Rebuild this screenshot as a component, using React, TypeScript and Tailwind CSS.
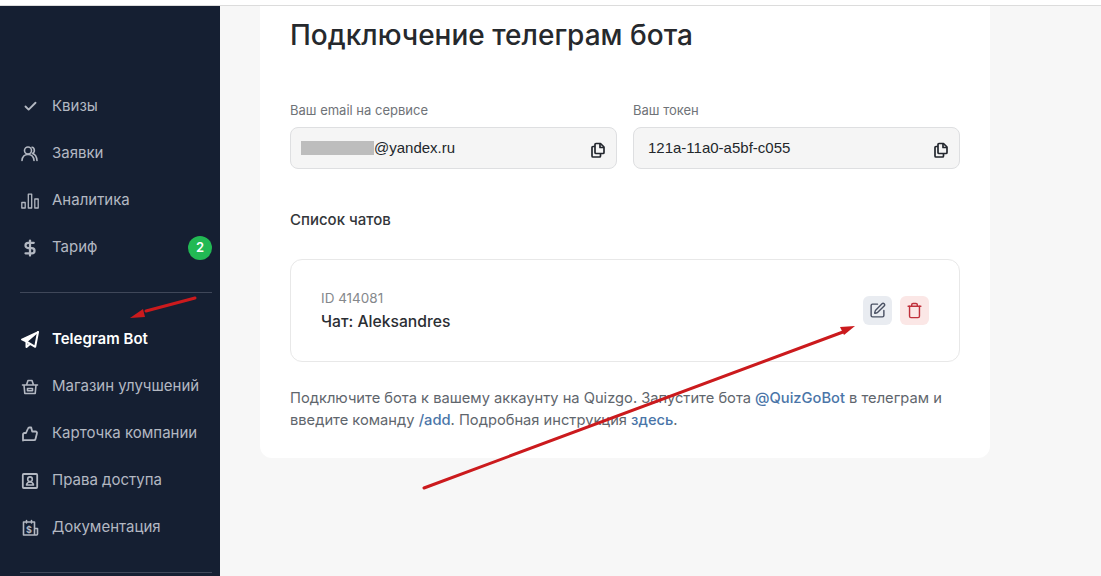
import { Check, DollarSign, SquarePen, Trash } from "lucide-react";
import type { ReactNode } from "react";

const font = "font-['Inter','Noto_Sans',sans-serif]";

function Glyph({ children }: { children: ReactNode }) {
    return (
        <svg width="18" height="18" viewBox="0 0 18 18" fill="none" stroke="currentColor" strokeWidth="1.6" strokeLinecap="round" strokeLinejoin="round">
            {children}
        </svg>
    );
}

const topItems: { label: string; icon: ReactNode; badge?: string }[] = [
    { label: "Квизы", icon: <Check size={15} strokeWidth={3} /> },
    {
        label: "Заявки",
        icon: (
            <Glyph>
                <circle cx="7" cy="5.500" r="3.500" />
                <path d="M1 15.500c.3-3.600 2.600-6 6-6s5.700 2.400 6 6M11 2.200c2.500.3 3.500 4.600.5 6.300 2.800.8 4.200 3.400 4.500 7" />
            </Glyph>
        ),
    },
    {
        label: "Аналитика",
        icon: (
            <Glyph>
                <path strokeWidth="1.300" d="M.8 10.500h3.400v5.500H.8zM7.300 2.200h3.400V16H7.300zM13.800 7h3.400v9h-3.400z" />
            </Glyph>
        ),
    },
    { label: "Тариф", icon: <DollarSign size={18} strokeWidth={3} />, badge: "2" },
];

const bottomItems: { label: string; icon: ReactNode; active?: boolean }[] = [
    {
        label: "Telegram Bot",
        active: true,
        icon: (
            <Glyph>
                <path fill="currentColor" strokeWidth="1.500" d="M17 1 .8 8.500l4.700 2.200L17 1Z" />
                <path strokeWidth="2" d="M17 1l-2.800 14.800-8.700-5.100v5.300l3.200-2.700" />
            </Glyph>
        ),
    },
    {
        label: "Магазин улучшений",
        icon: (
            <Glyph>
                <path d="M1.500 7h15M3 7l.8 8.500h10.400L15 7M5.500 7l1.500-4.500h4L12.500 7M6.500 10.500v2.200h5v-2.200z" />
            </Glyph>
        ),
    },
    {
        label: "Карточка компании",
        icon: (
            <Glyph>
                <path strokeWidth="1.800" d="M2 15.500V9.500a1.500 1.500 0 0 1 1.500-1.500H5l2-4.500a1.500 1.500 0 0 1 1.400-1h1.800l1 4h3.300a1.500 1.500 0 0 1 1.400 2l-1.400 5.500a1.500 1.500 0 0 1-1.500 1.200H3a1 1 0 0 1-1-.7Z" />
            </Glyph>
        ),
    },
    {
        label: "Права доступа",
        icon: (
            <Glyph>
                <rect x="1.800" y="2" width="14.400" height="14" rx="1" strokeWidth="1.800" />
                <circle cx="9" cy="7.200" r="2.300" />
                <path d="M5.500 13c.4-2 1.800-3 3.500-3s3.100 1 3.500 3z" />
            </Glyph>
        ),
    },
    {
        label: "Документация",
        icon: (
            <Glyph>
                <path d="M2.500 3h11v13h-11zM5.500 1.500V4M10.500 1.500V4M13.500 9.500h3v5.500a1 1 0 0 1-1 1h-2" />
                <text x="8" y="13.500" textAnchor="middle" fontSize="9" fontWeight="700" fill="currentColor" stroke="none">$</text>
            </Glyph>
        ),
    },
];

function NavRow({ label, icon, badge, active }: { label: string; icon: ReactNode; badge?: string; active?: boolean }) {
    return (
        <div className={`flex h-[47px] items-center ${active ? "text-white font-semibold" : "text-[#b3b8c2]"}`}>
            <span className="flex w-[32px] shrink-0 items-center pl-[1px]">
                <span className="flex w-[18px] justify-center">{icon}</span>
            </span>
            <span className="flex-1 text-[15px]">{label}</span>
            {badge && (
                <span className="flex h-[24px] w-[24px] items-center justify-center rounded-full bg-[#22b954] text-[13px] font-semibold text-white">
                    {badge}
                </span>
            )}
        </div>
    );
}

function CopyIcon() {
    return (
        <svg width="16" height="16" viewBox="0 0 16 16" fill="none" stroke="#23272e" strokeWidth="1.700" strokeLinejoin="round">
            <path d="M6 1.500h4.500l3.500 3.500v5.500a1 1 0 0 1-1 1H6a1 1 0 0 1-1-1v-8a1 1 0 0 1 1-1Z" />
            <path d="M10 1.500V5.500h4" />
            <path d="M5 4.500H3a1 1 0 0 0-1 1V14a1 1 0 0 0 1 1h6.500a1 1 0 0 0 1-1v-2" />
        </svg>
    );
}

function CopyField({ label, children }: { label: string; children: ReactNode }) {
    return (
        <div className="flex-1">
            <div className="mb-[7px] text-[13px] leading-[20px] text-[#6f7378]">{label}</div>
            <div className="flex h-[42px] items-center justify-between rounded-lg border border-[#dedfe1] bg-[#f5f5f5] pl-[10px] pr-[10px]">
                <div className="flex items-center font-['Liberation_Sans',sans-serif] text-[15px] text-[#23272b]">{children}</div>
                <span className="mt-[4px]">
                    <CopyIcon />
                </span>
            </div>
        </div>
    );
}

export default function App() {
    return (
        <div className={`relative flex h-[576px] w-[1101px] flex-col overflow-hidden bg-white ${font}`}>
            <div className="h-[6px] shrink-0 border-b border-[#dcdcdc] bg-white" />
            <div className="flex min-h-0 flex-1">
                <aside className="w-[220px] shrink-0 bg-[#151f32] pl-[20px] pr-[8px] pt-[77px]">
                    {topItems.map((item) => (
                        <NavRow key={item.label} {...item} />
                    ))}
                    <div className="mb-[23px] mt-[21px] h-px bg-[#3f4759]" />
                    {bottomItems.map((item) => (
                        <NavRow key={item.label} {...item} />
                    ))}
                    <div className="mt-[21px] h-px bg-[#3f4759]" />
                </aside>

                <main className="min-w-0 flex-1 bg-[#f7f7f7] pl-[40px]">
                    <section className="h-[452px] w-[730px] rounded-b-xl bg-white px-[30px]">
                        <h1 className="pt-[11px] text-[28px] font-medium leading-[36px] text-[#26292d]">Подключение телеграм бота</h1>

                        <div className="mt-[47px] flex gap-[16px]">
                            <CopyField label="Ваш email на сервисе">
                                <span className="h-[14px] w-[73px] bg-[#bdbdbd]" />
                                <span>@yandex.ru</span>
                            </CopyField>
                            <CopyField label="Ваш токен">
                                <span className="pl-[4px]">121a-11a0-a5bf-c055</span>
                            </CopyField>
                        </div>

                        <div className="mt-[41px] text-[15px] font-medium leading-[20px] text-[#33363a]">Список чатов</div>

                        <div className="mt-[29px] flex h-[103px] items-center justify-between rounded-xl border border-[#e8e8e8] pl-[30px] pr-[30px]">
                            <div>
                                <div className="text-[13.500px] leading-[20px] text-[#85888c]">ID 414081</div>
                                <div className="mt-[3px] text-[15.700px] font-medium leading-[22px] text-[#2b2e33]">Чат: Aleksandres</div>
                            </div>
                            <div className="flex gap-[8px]">
                                <button className="flex h-[29px] w-[29px] items-center justify-center rounded-md bg-[#e9ecf1] text-[#4a5163]">
                                    <SquarePen size={17} />
                                </button>
                                <button className="flex h-[29px] w-[29px] items-center justify-center rounded-md bg-[#fbe7e6] text-[#c0313c]">
                                    <Trash size={17} />
                                </button>
                            </div>
                        </div>

                        <p className="mt-[25px] text-[14.700px] leading-[22px] text-[#5f666d]">
                            Подключите бота к вашему аккаунту на Quizgo. Запустите бота <b className="font-medium text-[#4a75a8]">@QuizGoBot</b> в телеграм и
                            <br />
                            введите команду <b className="font-medium text-[#4a75a8]">/add</b>. Подробная инструкция <b className="font-medium text-[#4a75a8]">здесь</b>.
                        </p>
                    </section>
                </main>
            </div>

            {/* red annotation arrows drawn over the screenshot */}
            <svg className="pointer-events-none absolute left-0 top-0" width="1101" height="576" fill="#cb1a1d">
                <path d="M195 298 146 311" stroke="#cb1a1d" strokeWidth="3" strokeLinecap="round" />
                <path d="M130 318 143 309 145 317Z" />
                <path d="M424 488 843 332" stroke="#cb1a1d" strokeWidth="3" strokeLinecap="round" />
                <path d="M855 326 840 327 844 335Z" />
            </svg>
        </div>
    );
}
